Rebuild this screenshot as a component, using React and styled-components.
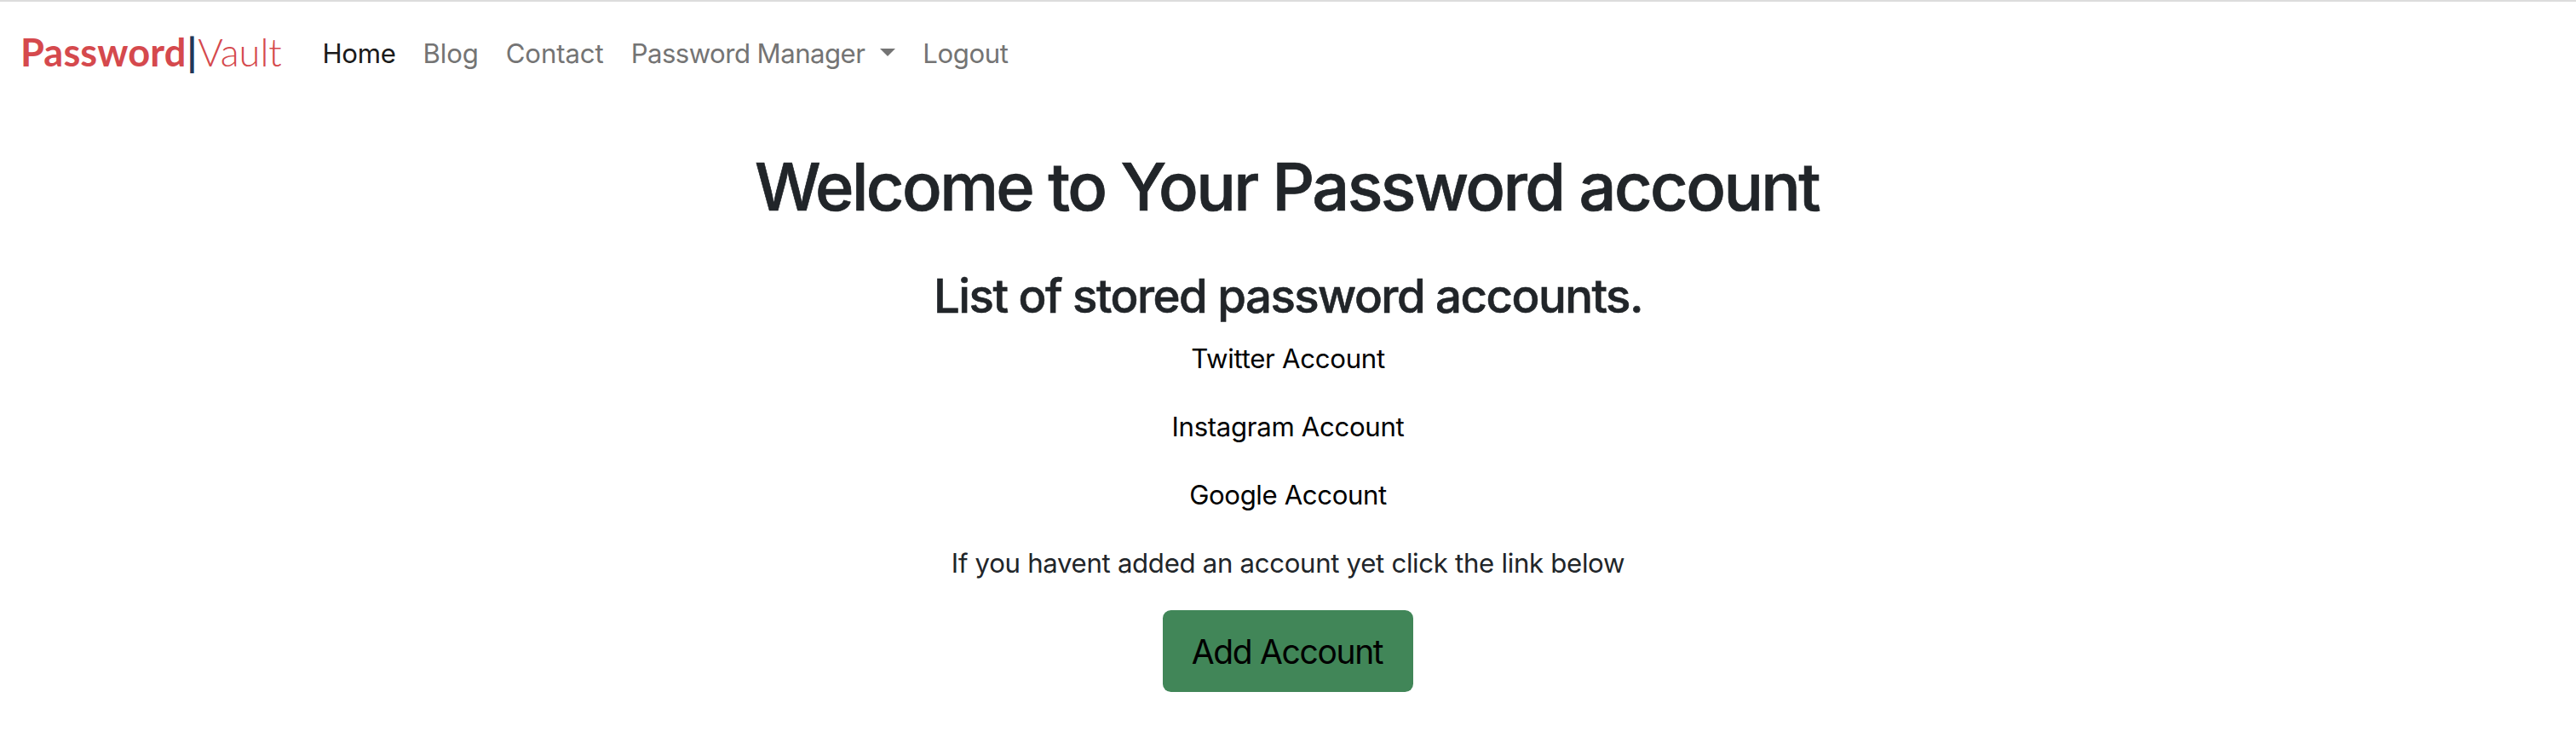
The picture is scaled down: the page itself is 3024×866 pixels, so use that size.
import React from 'react';
import styled, { createGlobalStyle } from 'styled-components';

const GlobalStyle = createGlobalStyle`
  *, *::before, *::after { box-sizing: border-box; }
  body {
    margin: 0;
    background: #fff;
    color: #212529;
    font-family: Inter, "Liberation Sans", sans-serif;
    font-size: 31.2px;
    line-height: 48px;
  }
`;

const Page = styled.div`
  border-top: 2px solid #dcdcdc;
`;

const Navbar = styled.nav`
  display: flex;
  align-items: center;
  height: 122px;
  padding: 0 24px;
`;

const Brand = styled.a`
  display: flex;
  width: 338.5px;
  padding-bottom: 5px;
  color: #d5494d;
  font-family: Lato, sans-serif;
  font-size: 45.2px;
  line-height: 60px;
  text-decoration: none;
`;

const BrandName = styled.span`
  font-weight: 700;
  letter-spacing: 0.1px;
`;

const BrandBar = styled.span`
  margin: 0 1px;
  color: #223759;
  font-weight: 700;
`;

const BrandSuffix = styled.span`
  font-weight: 300;
`;

const NavList = styled.ul`
  display: flex;
  margin: 0;
  padding: 0;
  list-style: none;
`;

const NavLink = styled.a`
  display: flex;
  align-items: center;
  padding: 0 16px;
  color: ${(p) => (p.$active ? '#1a1a1a' : '#747474')};
  letter-spacing: ${(p) => p.$tracking}px;
  text-decoration: none;
`;

const Caret = styled.span`
  margin: -4px 0 0 18px;
  border-top: 9px solid currentColor;
  border-left: 9px solid transparent;
  border-right: 9px solid transparent;
`;

const Main = styled.main`
  display: flex;
  flex-direction: column;
  align-items: center;
  padding-top: 47px;
`;

const Title = styled.h1`
  margin: 0 0 47px;
  padding-right: 3px;
  font-size: 77.5px;
  font-weight: 500;
  line-height: 96px;
  letter-spacing: -2.63px;
  -webkit-text-stroke: 0.7px currentColor;
`;

const Subtitle = styled.h2`
  margin: 0 0 16px;
  font-size: 54.6px;
  font-weight: 500;
  line-height: 67px;
  letter-spacing: -1.54px;
  -webkit-text-stroke: 0.6px currentColor;
`;

const AccountLink = styled.a`
  margin-bottom: 32px;
  color: #000;
  letter-spacing: ${(p) => p.$tracking}px;
  text-decoration: none;
`;

const Hint = styled.p`
  margin: 0 0 31px;
  letter-spacing: -0.32px;
`;

const AddButton = styled.button`
  width: 294px;
  height: 96px;
  padding: 1px 2px 0 0;
  border: 0;
  border-radius: 9.6px;
  background: #418658;
  color: #000;
  font-family: inherit;
  font-size: 39px;
  line-height: 60px;
  letter-spacing: -1.35px;
`;

const navItems = [
  { label: 'Home', active: true, tracking: -0.35 },
  { label: 'Blog', tracking: -0.15 },
  { label: 'Contact', tracking: -0.12 },
  { label: 'Password Manager', tracking: -0.57, menu: true },
  { label: 'Logout', tracking: -0.42 },
];

const accounts = [
  { label: 'Twitter Account', tracking: -0.3 },
  { label: 'Instagram Account', tracking: -0.33 },
  { label: 'Google Account', tracking: -0.4 },
];

export default function App() {
  return (
    <Page>
      <GlobalStyle />
      <Navbar>
        <Brand>
          <BrandName>Password</BrandName>
          <BrandBar>|</BrandBar>
          <BrandSuffix>Vault</BrandSuffix>
        </Brand>
        <NavList>
          {navItems.map((item) => (
            <li key={item.label}>
              <NavLink $active={item.active} $tracking={item.tracking}>
                {item.label}
                {item.menu && <Caret />}
              </NavLink>
            </li>
          ))}
        </NavList>
      </Navbar>
      <Main>
        <Title>Welcome to Your Password account</Title>
        <Subtitle>List of stored password accounts.</Subtitle>
        {accounts.map((account) => (
          <AccountLink key={account.label} $tracking={account.tracking}>
            {account.label}
          </AccountLink>
        ))}
        <Hint>If you havent added an account yet click the link below</Hint>
        <AddButton>Add Account</AddButton>
      </Main>
    </Page>
  );
}
